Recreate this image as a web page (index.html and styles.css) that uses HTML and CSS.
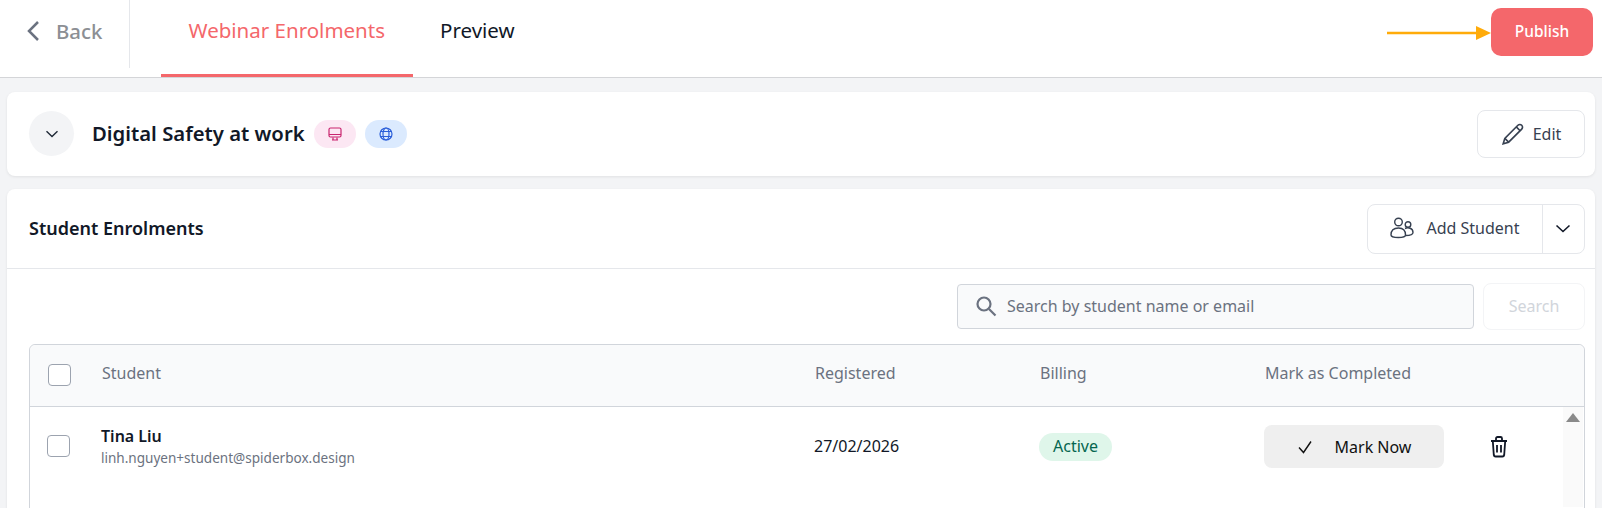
FILE: index.html
```html
<!DOCTYPE html>
<html lang="en">
<head>
<meta charset="utf-8">
<title>Webinar Enrolments</title>
<link rel="stylesheet" href="styles.css">
</head>
<body>
<header class="topbar">
  <a class="back">
    <svg class="back-icon" width="14" height="22" viewBox="0 0 14 22" fill="none"><path d="M12 2 3 11l9 9" stroke="#6b7280" stroke-width="2.500"/></svg>
    <span>Back</span>
  </a>
  <nav class="tabs">
    <a class="tab tab-active">Webinar Enrolments</a>
    <a class="tab">Preview</a>
  </nav>
  <div class="publish-wrap">
    <svg class="arrow" width="104" height="14" viewBox="0 0 104 14"><path d="M0 7h90" stroke="#ffab0a" stroke-width="2.500"/><path d="M89 0l15 7-15 7z" fill="#ffab0a"/></svg>
    <button class="publish">Publish</button>
  </div>
</header>
<main class="page">
  <section class="card course">
    <span class="circle">
      <svg width="14" height="8" viewBox="0 0 14 8" fill="none"><path d="M1.500 1.200 7 6.500l5.500-5.300" stroke="#1f2937" stroke-width="1.400"/></svg>
    </span>
    <h1 class="course-title">Digital Safety at work</h1>
    <span class="pill pill-pink">
      <svg width="14" height="14" viewBox="0 0 14 14" fill="none" stroke="#c9256f" stroke-width="1.200"><rect x="1" y="1" width="12" height="9" rx="1.500"/><path d="M1 7.500h12M5 10.500v2.500M9 10.500v2.500M4 13h6"/></svg>
    </span>
    <span class="pill pill-blue">
      <svg width="14" height="14" viewBox="0 0 14 14" fill="none" stroke="#2b5fd9" stroke-width="1.200"><circle cx="7" cy="7" r="6"/><ellipse cx="7" cy="7" rx="3" ry="6"/><path d="M1.500 4.500h11M1.500 9.500h11"/></svg>
    </span>
    <button class="btn edit">
      <svg width="24" height="24" viewBox="0 0 22 22" fill="none" stroke="#374151" stroke-width="1.500"><path d="M2 20l1.500-5L15.500 3a2 2 0 0 1 3.500 3.500L7 18.500z"/><path d="M14 4.500l3.500 3.500M3.500 15l3.500 3.500"/></svg>
      <span>Edit</span>
    </button>
  </section>
  <section class="card enrol">
    <div class="enrol-head">
      <h2 class="enrol-title">Student Enrolments</h2>
      <div class="split">
        <button class="split-main">
          <svg width="24" height="22" viewBox="0 0 24 22" fill="none" stroke="#374151" stroke-width="1.400"><circle cx="8.500" cy="5" r="3.800"/><circle cx="18" cy="7.500" r="2.800"/><path d="M1 18c0-4.500 3-7 7.500-7s7 2.500 7 7c0 1.500-3 2.500-7.200 2.500S1 19.500 1 18z"/><path d="M15 11.500c3-1.500 8-.5 8 4 0 2.500-3 3-7.500 3"/></svg>
          <span>Add Student</span>
        </button>
        <button class="split-caret">
          <svg width="16" height="9" viewBox="0 0 16 9" fill="none"><path d="M1.500 1.500 8 7.500l6.500-6" stroke="#111827" stroke-width="1.600"/></svg>
        </button>
      </div>
    </div>
    <div class="search-row">
      <label class="search-box">
        <svg width="22" height="22" viewBox="0 0 22 22" fill="none" stroke="#6b7280" stroke-width="2.200"><circle cx="9" cy="9" r="6.500"/><path d="M14 14l6.500 6.500"/></svg>
        <span>Search by student name or email</span>
      </label>
      <button class="search-btn">Search</button>
    </div>
    <div class="table">
      <div class="row head">
        <span class="check check-head"></span>
        <span>Student</span>
        <span>Registered</span>
        <span>Billing</span>
        <span>Mark as Completed</span>
      </div>
      <div class="row body">
        <span class="check"></span>
        <div class="student">
          <strong>Tina Liu</strong>
          <small>linh.nguyen+student@spiderbox.design</small>
        </div>
        <span class="date">27/02/2026</span>
        <div class="billing"><span class="badge">Active</span></div>
        <div class="actions">
          <button class="mark">
            <svg width="16" height="14" viewBox="0 0 16 14" fill="none"><path d="M2 7.500l4.500 5L14 1.500" stroke="#111" stroke-width="1.400"/></svg>
            <span>Mark Now</span>
          </button>
          <svg class="trash" width="18" height="22" viewBox="0 0 18 22" fill="none" stroke="#111827" stroke-width="1.800"><path d="M1 5h16M6 5V2.500A1.500 1.500 0 0 1 7.500 1h3A1.500 1.500 0 0 1 12 2.500V5M2.800 5l1 14a1.800 1.800 0 0 0 1.800 1.500h6.800a1.800 1.800 0 0 0 1.800-1.500l1-14M7 9v7.500M11 9v7.500"/></svg>
        </div>
        <div class="scrollbar"><span class="scroll-up"></span></div>
      </div>
    </div>
  </section>
</main>
</body>
</html>
```
FILE: styles.css
```css
* { box-sizing: border-box; }
html, body { margin: 0; height: 508px; overflow: hidden; }
body { background: #f3f4f6; font-family: "Noto Sans", sans-serif; color: #111827; }
button { font-family: inherit; cursor: pointer; }
h1, h2 { margin: 0; }

.topbar { height: 78px; background: #fff; border-bottom: 1px solid #d4d5d8; display: flex; }
.back { width: 130px; height: 68px; border-right: 1px solid #e5e7eb; display: flex; align-items: center; padding-left: 26px; gap: 16px; font-size: 20.400px; font-weight: 500; color: #8c8f94; padding-bottom: 6px; }
.tabs { display: flex; margin-left: 31px; }
.tab { height: 77px; padding: 0 27.500px; display: flex; align-items: center; font-size: 20.500px; padding-bottom: 14px; border-bottom: 3px solid transparent; }
.tab-active { color: #f4676b; border-bottom-color: #f4676b; }
.publish-wrap { margin-left: auto; padding: 8px 9px 0 0; display: flex; align-items: flex-start; }
.arrow { margin-top: 18px; }
.publish { width: 102px; height: 48px; border: 0; border-radius: 10px; background: #f4676b; color: #fff; font-size: 15.500px; font-weight: 500; padding-bottom: 3px; }

.page { padding: 14px 7px 0; display: flex; flex-direction: column; gap: 13px; }
.card { background: #fff; border-radius: 8px; box-shadow: 0 1px 3px rgba(0,0,0,.08); }
.course { height: 84px; display: flex; align-items: center; padding: 0 10px 0 22px; }
.circle { width: 45px; height: 45px; border-radius: 50%; background: #f3f4f6; display: flex; align-items: center; justify-content: center; margin-top: -1px; }
.course-title { font-size: 20.300px; font-weight: 600; margin-left: 18px; line-height: 1; margin-top: -2px; }
.pill { width: 42px; height: 28px; border-radius: 14px; display: flex; align-items: center; justify-content: center; }
.pill-pink { background: #fce7f3; margin-left: 9px; }
.pill-blue { background: #dbeafe; margin-left: 9px; }
.btn { background: #fff; border: 1px solid #e5e7eb; border-radius: 8px; display: flex; align-items: center; }
.edit { margin-left: auto; width: 108px; height: 48px; justify-content: center; gap: 8px; font-size: 16px; color: #374151; padding-bottom: 2px; }

.enrol { height: 330px; }
.enrol-head { height: 80px; border-bottom: 1px solid #e5e7eb; display: flex; align-items: center; justify-content: space-between; padding: 0 10px 0 22px; }
.enrol-title { font-size: 18px; font-weight: 600; margin-top: -2px; }
.split { display: flex; width: 218px; height: 50px; border: 1px solid #e5e7eb; border-radius: 8px; }
.split-main { width: 175px; border: 0; border-right: 1px solid #e5e7eb; background: none; display: flex; align-items: center; justify-content: center; gap: 12px; font-size: 16px; color: #374151; padding-bottom: 2px; }
.split-caret { flex: 1; border: 0; background: none; display: flex; align-items: center; justify-content: center; padding-right: 8px; }
.search-row { display: flex; justify-content: flex-end; gap: 9px; padding: 15px 10px 14px 22px; }
.search-box { width: 517px; height: 45px; background: #f9fafb; border: 1px solid #d1d5db; border-radius: 4px; display: flex; align-items: center; gap: 10px; padding-left: 17px; padding-bottom: 2px; font-size: 16px; color: #6b7280; }
.search-btn { width: 102px; height: 47px; background: #fff; border: 1px solid #f3f4f6; border-radius: 8px; color: #d1d5db; font-size: 16px; margin-top: -1px; padding-bottom: 3px; }

.table { margin: 0 10px 0 22px; border: 1px solid #d1d5db; border-radius: 6px 6px 0 0; height: 200px; }
.row { display: grid; grid-template-columns: 72px 713px 225px 225px 1fr; align-items: center; }
.head { height: 62px; background: #f9fafb; border-bottom: 1px solid #d1d5db; border-radius: 6px 6px 0 0; font-size: 16px; color: #6b7280; padding-bottom: 5px; }
.check { width: 23px; height: 22px; margin-left: 18px; background: #fff; border: 1px solid #9ca3af; border-radius: 4px; }
.check-head { margin-top: 3px; }
.body { position: relative; height: 100px; align-items: flex-start; font-size: 16px; }
.body .check { margin-top: 28px; margin-left: 17px; }
.student { display: flex; flex-direction: column; padding-top: 18px; margin-left: -1px; }
.student strong { font-size: 16px; font-weight: 600; line-height: 22px; }
.student small { font-size: 13.550px; color: #6b7280; line-height: 22px; }
.date { padding-top: 28px; margin-left: -1px; }
.billing { padding-top: 26px; margin-left: -1px; }
.badge { display: inline-block; background: #dff6ea; color: #05664f; border-radius: 14px; padding: 0 14px 1px; line-height: 27px; }
.actions { display: flex; align-items: flex-start; padding-top: 18px; margin-left: -1px; }
.mark { width: 180px; height: 43px; border: 0; background: #efefef; border-radius: 8px; display: flex; align-items: center; justify-content: center; gap: 22px; font-size: 16px; color: #111; }
.trash { margin: 11px 0 0 46px; }
.scrollbar { position: absolute; right: 1px; top: 0; width: 20px; height: 100px; background: #fafafa; display: flex; justify-content: center; padding-top: 6px; }
.scroll-up { width: 0; height: 0; border-left: 7px solid transparent; border-right: 7px solid transparent; border-bottom: 9px solid #8a8a8a; }
```
